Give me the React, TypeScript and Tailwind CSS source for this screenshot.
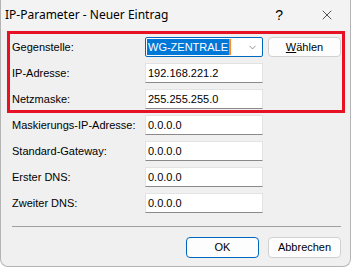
import { ChevronDown, X } from "lucide-react";

const font = { fontFamily: '"Liberation Sans", Arial, sans-serif' };

interface FieldRowProps {
  label: string;
  value: string;
}

function FieldRow({ label, value }: FieldRowProps) {
  return (
    <div className="flex h-[20px] items-center">
      <span className="w-[133px] shrink-0 whitespace-nowrap text-[11px] text-black">
        {label}
      </span>
      <div className="flex h-[20px] w-[118px] shrink-0 items-center border border-[#e3e3e3] border-b-[#8a8a8a] bg-white pl-[2px] text-[11px] text-black">
        {value}
      </div>
    </div>
  );
}

export default function App() {
  return (
    <div className="h-[269px] w-[353px] bg-white" style={font}>
      <div className="flex h-[267px] w-[351px] flex-col overflow-hidden rounded-b-[8px] border border-t-0 border-[#b4b4b4] bg-[#f0f0f0]">
        {/* title bar */}
        <div className="flex h-[30px] shrink-0 items-center bg-[#f3f3f3]">
          <span
            className="pl-[4px] text-[12px] text-black"
            style={{ fontFamily: '"Noto Sans", "Open Sans", sans-serif' }}
          >
            IP-Parameter - Neuer Eintrag
          </span>
          <span className="ml-auto mr-[36px] text-[14px] text-black">?</span>
          <X className="mr-[15px] h-[16px] w-[16px] text-black" strokeWidth={1} />
        </div>

        {/* highlighted fields */}
        <div className="ml-[6px] mt-[1px] w-[338px] shrink-0 border-[3px] border-[#e81123] pb-[1px] pl-[2px] pt-[3px]">
          <div className="flex flex-col gap-[6px]">
            <div className="flex h-[20px] items-center">
              <span className="w-[133px] shrink-0 text-[11px] text-black">
                Gegenstelle:
              </span>
              <div className="flex h-[20px] w-[118px] shrink-0 items-center rounded-[2px] border border-[#0067c0] bg-white pl-[1px]">
                <span className="bg-[#0078d7] px-[1px] text-[11px] leading-[16px] text-white">
                  WG-ZENTRALE
                </span>
                <span className="h-[16px] w-[2px] bg-[#ff8a28]" />
                <ChevronDown
                  className="ml-auto mr-[4px] h-[11px] w-[11px] text-[#606060]"
                  strokeWidth={1.5}
                />
              </div>
              <button className="ml-[5px] h-[20px] w-[73px] shrink-0 rounded-[4px] border border-[#d0d0d0] bg-[#fdfdfd] text-[11px] text-black">
                <span className="underline">W</span>ählen
              </button>
            </div>
            <FieldRow label="IP-Adresse:" value="192.168.221.2" />
            <FieldRow label="Netzmaske:" value="255.255.255.0" />
          </div>
        </div>

        {/* other fields */}
        <div className="ml-[11px] mt-[2px] flex flex-col gap-[6px]">
          <FieldRow label="Maskierungs-IP-Adresse:" value="0.0.0.0" />
          <FieldRow label="Standard-Gateway:" value="0.0.0.0" />
          <FieldRow label="Erster DNS:" value="0.0.0.0" />
          <FieldRow label="Zweiter DNS:" value="0.0.0.0" />
        </div>

        <div className="ml-[11px] mt-[13px] h-[1px] w-[329px] shrink-0 bg-[#a0a0a0]" />

        <div className="mr-[9px] mt-[10px] flex justify-end gap-[9px]">
          <button className="h-[21px] w-[73px] rounded-[4px] border border-[#0067c0] bg-[#fdfdfd] text-[11px] text-black">
            OK
          </button>
          <button className="h-[21px] w-[73px] rounded-[4px] border border-[#d0d0d0] bg-[#fdfdfd] text-[11px] text-black">
            Abbrechen
          </button>
        </div>
      </div>
    </div>
  );
}
